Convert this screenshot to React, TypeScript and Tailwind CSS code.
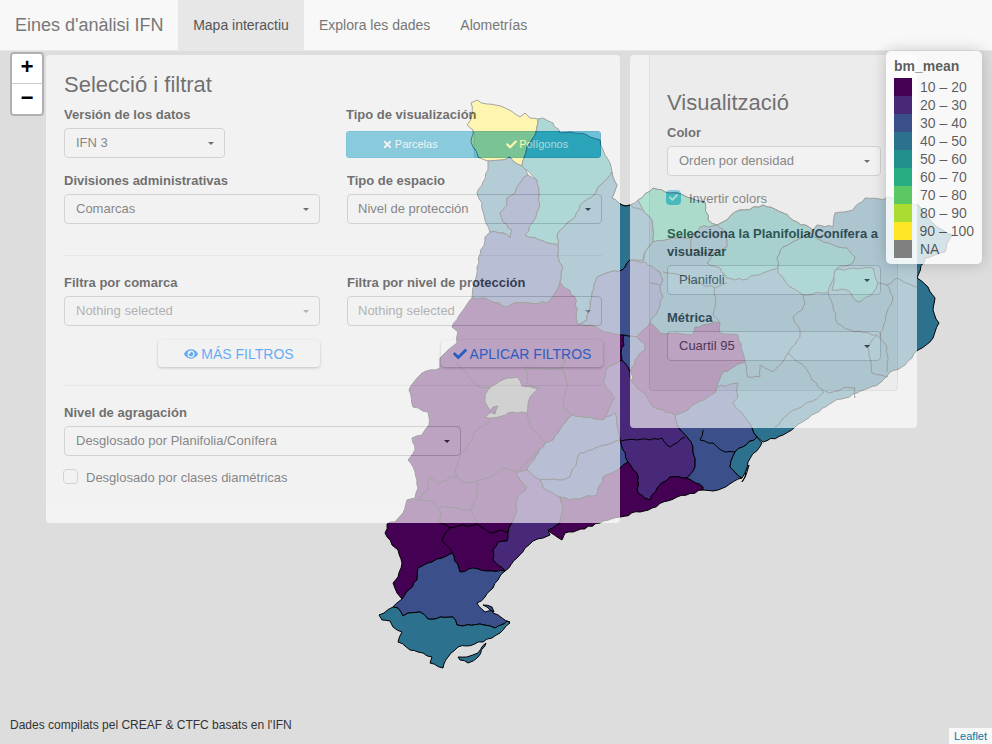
import React from "react";
import { FaCheck, FaEye, FaTimes } from "react-icons/fa";

const C = { a: "#440154", b: "#482878", c: "#3b4f8a", d: "#2c728e", e: "#21908c", f: "#27ad81", g: "#5cc863", h: "#aadc32", i: "#fde725", n: "#808080" };

const shapes: [string, string][] = [
  [C.d, "612,172 617,185 612,198 622,205 630,205 638,200 653,188 665,192 683,195 705,202 708,220 717,225 723,222 735,212 745,210 763,205 783,213 797,222 813,230 817,225 833,227 835,213 853,210 865,198 883,200 887,197 905,200 918,205 925,215 937,227 953,235 947,243 945,252 925,258 917,278 928,287 935,298 933,310 939,323 935,332 933,338 922,348 918,350 905,365 890,372 880,383 857,393 833,402 795,427 783,435 763,442 757,437 752,428 700,400 620,340 578,325 563,283 558,245"],
  [C.i, "471,103 477,100 487,104 503,107 520,117 525,113 530,118 538,119 536,133 527,147 524,158 522,166 513,161 510,157 502,160 488,161 478,157 473,147 471,142 473,130 467,125 472,115"],
  [C.e, "538,119 543,118 553,123 560,133 575,133 587,135 600,140 603,150 610,163 612,172 598,187 592,197 580,205 575,217 567,223 558,233 558,245 547,243 525,235 533,222 539,208 537,180 522,166 524,158 527,147 536,133"],
  [C.d, "488,161 502,160 510,157 513,161 522,166 528,175 524,177 517,187 515,193 507,198 507,205 500,213 503,222 512,230 510,238 503,233 490,232 486,223 484,215 482,203 477,193 483,182 488,170"],
  [C.c, "528,175 537,180 539,208 533,222 525,235 547,243 558,245 558,257 563,267 560,282 557,290 547,303 515,303 507,307 483,298 472,298 477,267 485,237 490,232 503,233 510,238 512,230 503,222 500,213 507,205 507,198 515,193 517,187 524,177"],
  [C.d, "612,172 617,185 612,198 622,205 630,205 643,210 652,220 653,242 645,252 643,260 630,260 622,270 610,272 597,277 592,293 587,320 578,325 575,297 560,282 563,267 558,257 558,245 558,233 567,223 575,217 580,205 592,197 598,187"],
  [C.c, "578,325 587,320 592,293 597,277 610,272 622,270 630,260 645,262 660,272 663,280 660,287 663,297 658,310 650,323 637,337 620,337 600,330 590,325"],
  [C.f, "638,200 653,188 665,192 683,195 705,202 708,220 717,225 700,227 692,237 665,240 653,242 652,220 643,210"],
  [C.e, "717,225 723,222 735,212 745,210 763,205 783,213 797,222 813,230 810,233 797,240 783,247 777,258 778,268 763,273 743,280 727,278 720,268 707,263 715,253 727,247 727,233"],
  [C.e, "777,258 783,247 797,240 810,233 820,240 833,245 847,248 855,257 853,263 837,268 833,280 828,292 803,295 790,287 778,273 778,268"],
  [C.e, "832,290 835,270 853,268 873,268 878,283 873,293 858,302 847,290"],
  [C.a, "472,298 483,298 507,307 515,303 547,303 557,290 560,282 575,297 578,325 590,325 600,330 620,335 624,335 624,345 621,353 622,360 608,367 603,382 615,398 603,420 572,415 563,425 553,440 545,443 527,470 516,473 527,487 517,498 517,510 512,523 508,533 507,541 498,542 493,550 493,560 505,571 487,571 473,568 460,572 452,553 442,558 432,562 418,568 417,580 402,599 397,593 393,583 398,577 402,563 398,550 392,545 385,533 387,524 395,522 403,513 407,500 415,498 418,488 417,480 415,472 408,460 415,450 412,438 422,435 429,425 428,412 413,407 409,390 413,383 422,373 440,368 440,358 448,350 457,343 458,332 452,327"],
  [C.n, "485,395 492,386 507,378 517,377 522,386 538,388 530,397 527,413 513,412 493,418 485,417 491,412 485,402"],
  [C.a, "489,412 493,407 498,406 495,414"],
  [C.c, "624,335 637,337 645,343 645,350 640,353 632,367 630,372 622,360 621,353 624,345"],
  [C.a, "637,337 650,323 660,333 677,333 692,335 695,327 715,322 720,323 720,333 738,335 745,362 723,372 717,387 715,393 697,403 688,410 675,415 663,410 653,407 647,397 632,382 632,367 640,353 645,350 645,343"],
  [C.b, "608,367 622,360 630,372 632,382 647,397 653,407 663,410 675,415 679,428 687,437 693,447 695,467 687,478 670,477 658,487 650,500 638,493 637,473 628,462 620,440 615,413 603,420 615,398 603,382"],
  [C.b, "516,473 527,470 540,480 543,488 560,497 563,510 560,523 548,530 550,535 543,538 533,541 525,548 517,558 505,571 493,560 493,550 498,542 507,541 508,533 512,523 517,510 517,498 527,487"],
  [C.c, "545,443 553,440 563,425 572,415 603,420 615,413 620,440 592,450 580,453 570,477 563,480 540,480 527,470"],
  [C.c, "540,480 563,480 570,477 580,453 592,450 620,440 628,462 620,468 603,477 597,495 570,500 560,497 543,488"],
  [C.a, "560,523 563,510 560,497 570,500 597,495 603,477 620,468 628,462 637,473 638,493 650,500 658,487 670,477 687,478 703,487 703,490 677,497 652,508 620,517 600,523 573,532 565,533 562,540 548,530"],
  [C.c, "675,415 688,410 697,403 715,393 717,387 738,383 738,397 733,403 747,420 752,428 757,437 735,452 730,467 742,478 718,490 703,490 703,487 687,478 695,467 693,447 687,437 679,428"],
  [C.d, "735,452 757,437 762,443 748,462 745,473 742,478 730,467"],
  [C.c, "393,607 402,599 417,580 418,568 432,562 442,558 452,553 460,572 473,568 487,571 505,571 498,580 493,588 485,597 477,603 485,612 492,610 493,613 502,618 510,622 495,628 480,624 463,626 457,625 453,617 428,619 420,612 408,613 403,616 398,608"],
  [C.c, "483,605 492,607 494,612 487,607"],
  [C.d, "393,607 384,613 379,615 382,620 390,621 393,627 402,632 398,642 410,650 423,653 432,657 430,663 443,668 448,657 458,647 483,642 500,633 510,623 507,621 495,628 480,624 463,626 457,625 453,617 428,619 420,612 408,613 403,616 398,608"],
  [C.d, "458,657 460,660 468,663 478,657 486,643 478,653 467,657"],
  ["#ffffff", "742,482 747,472 749,465 746,471"],
];

const lines: string[] = [
  "457,363 477,386 489,387",
  "490,420 477,430 460,457 456,467 457,477 467,483 487,478 502,468 515,472 527,463 545,443 530,427 527,413",
  "538,388 527,383 525,368 562,368 565,360 555,353",
  "553,440 563,425 572,415 563,407 567,383 562,368",
  "429,477 428,490 417,500 433,502 440,510 440,523 450,528 442,540 452,553",
  "429,477 438,484 450,477 457,477",
  "478,483 477,497 470,510 478,523",
  "440,507 470,510",
  "450,528 477,524 490,533 500,530 508,533",
  "653,242 645,252 643,262",
  "692,237 690,250 707,253 715,253",
  "663,272 680,275 690,280 715,288 727,283",
  "715,288 715,307 713,315 720,323",
  "803,295 805,303 802,310 793,317 795,323 800,330 800,337 792,347 788,353 798,362 807,370 812,380 823,390 823,393 813,401 790,412 775,427",
  "825,391 830,393 847,387 855,388 855,398",
  "745,362 748,377 760,377 760,365 773,372 783,362 788,353",
  "828,292 833,305 837,323 850,330 877,335 887,347 887,372",
  "878,283 887,285 897,278 917,287",
  "887,285 893,297 887,312 880,337",
  "877,335 868,348 872,373 888,377",
  "650,283 660,285",
  "621,441 637,440 650,440 662,438 670,447 685,437",
  "703,430 700,440 713,443 725,452 735,452",
];

// Roughen borders the same way on both sides of a shared edge, so they read as real coastlines.
const noise = (x: number, y: number) => {
  const s = Math.sin(x * 12.9898 + y * 78.233) * 43758.5453;
  return s - Math.floor(s) - 0.5;
};

const rough = (points: string, closed: boolean) => {
  const pts = points.split(" ").map((p) => p.split(",").map(Number));
  const out: string[] = [];
  const count = closed ? pts.length : pts.length - 1;
  for (let i = 0; i < count; i++) {
    const a = pts[i];
    const b = pts[(i + 1) % pts.length];
    out.push(`${a[0]},${a[1]}`);
    const flip = a[0] > b[0] || (a[0] === b[0] && a[1] > b[1]);
    const [p, q] = flip ? [b, a] : [a, b];
    const dx = q[0] - p[0];
    const dy = q[1] - p[1];
    const len = Math.hypot(dx, dy);
    const n = Math.floor(len / 4);
    const mids: string[] = [];
    for (let k = 1; k < n; k++) {
      const t = k / n;
      const x = p[0] + dx * t;
      const y = p[1] + dy * t;
      const off = noise(Math.round(x), Math.round(y)) * 2.2;
      mids.push(`${(x - (dy / len) * off).toFixed(1)},${(y + (dx / len) * off).toFixed(1)}`);
    }
    if (flip) mids.reverse();
    out.push(...mids);
  }
  if (!closed) out.push(`${pts[pts.length - 1][0]},${pts[pts.length - 1][1]}`);
  return out.join(" ");
};

const Caret = () => (
  <span className="h-0 w-0 border-x-[3px] border-t-[3px] border-x-transparent border-t-[#333]" />
);

const Select = ({ text, muted, nudge, className }: { text: string; muted?: boolean; nudge?: boolean; className?: string }) => (
  <div className={`flex h-[30px] items-center justify-between rounded border border-[#ccc] bg-white pl-[11px] pr-[10px] text-[13px] ${muted ? "text-[#999]" : "text-[#555]"} ${className ?? ""}`}>
    <span className={nudge ? "-ml-px" : ""}>{text}</span>
    {muted ? (
      <span className="h-0 w-0 border-x-[3px] border-t-[3px] border-x-transparent border-t-[#999]" />
    ) : (
      <Caret />
    )}
  </div>
);

const Label = ({ children, className }: { children: React.ReactNode; className?: string }) => (
  <div className={`text-[13px] font-bold leading-4 text-[#333] ${className ?? ""}`}>{children}</div>
);

const Field = ({ label, text, muted, nudge, className }: { label: string; text: string; muted?: boolean; nudge?: boolean; className?: string }) => (
  <div className={className}>
    <Label className="mb-[5px]">{label}</Label>
    <Select text={text} muted={muted} nudge={nudge} />
  </div>
);

const ActionButton = ({ icon, text }: { icon: React.ReactNode; text: string }) => (
  <div className="flex h-[27px] w-[162px] items-center justify-center gap-[3px] rounded-sm bg-white text-sm text-[#1e90ff] shadow-[0_1px_3px_rgba(0,0,0,0.3)]">
    {icon}
    <span>{text}</span>
  </div>
);

const legendRows: [string, string][] = [
  [C.a, "10 – 20"],
  [C.b, "20 – 30"],
  [C.c, "30 – 40"],
  [C.d, "40 – 50"],
  [C.e, "50 – 60"],
  [C.f, "60 – 70"],
  [C.g, "70 – 80"],
  [C.h, "80 – 90"],
  [C.i, "90 – 100"],
  [C.n, "NA"],
];

export default function App() {
  return (
    <div className="flex h-[744px] w-[992px] flex-col overflow-hidden bg-[#dddddd] font-['Liberation_Sans',Arial,sans-serif]">
      <nav className="flex h-[51px] shrink-0 border-b border-[#e7e7e7] bg-[#f8f8f8] text-sm text-[#777]">
        <div className="flex w-[178px] items-center pl-[15px] text-lg">Eines d'anàlisi IFN</div>
        <div className="flex w-[126px] items-center justify-center bg-[#e7e7e7] text-[#555]">Mapa interactiu</div>
        <div className="flex items-center px-[15px]">Explora les dades</div>
        <div className="flex items-center px-[15px]">Alometrías</div>
      </nav>

      <main className="relative flex-1">
        <svg className="absolute inset-0 h-full w-full" viewBox="0 51 992 693">
          {shapes.map(([fill, points], i) => (
            <polygon key={i} points={rough(points, true)} fill={fill} stroke="#000" strokeWidth="1" strokeLinejoin="round" />
          ))}
          {lines.map((points, i) => (
            <polyline key={i} points={rough(points, false)} fill="none" stroke="#000" strokeWidth="1" strokeLinejoin="round" />
          ))}
        </svg>

        {/* left panel */}
        <section className="absolute left-[46px] top-[4px] h-[468px] w-[574px] rounded-sm bg-white pl-[18px] pr-[18px] pt-[18px] opacity-[0.64]">
          <h3 className="text-[22px] leading-6 text-[#333]">Selecció i filtrat</h3>
          <div className="mt-[10px] grid grid-cols-[256px_255px] gap-x-[27px] gap-y-[15px]">
            <div>
              <Label className="mb-[5px]">Versión de los datos</Label>
              <Select text="IFN 3" className="w-[161px]" />
            </div>
            <div className="-ml-px">
              <Label className="mb-[8px]">Tipo de visualización</Label>
              <div className="flex h-[27px] w-[255px] overflow-hidden rounded-sm text-[11px] text-white">
                <div className="flex flex-1 items-center justify-center gap-[2px] border border-[#46b8da] bg-[#5bc0de]">
                  <FaTimes size={11} />
                  <span>Parcelas</span>
                </div>
                <div className="flex flex-1 items-center justify-center gap-[2px] border border-[#269abc] bg-[#31b0d5]">
                  <FaCheck size={11} />
                  <span>Polígonos</span>
                </div>
              </div>
            </div>
            <Field label="Divisiones administrativas" text="Comarcas" />
            <Field label="Tipo de espacio" text="Nivel de protección" nudge />
          </div>
          <hr className="mt-[31px] border-[#eee]" />
          <div className="mt-[19px] grid grid-cols-[256px_255px] gap-x-[27px]">
            <Field label="Filtra por comarca" text="Nothing selected" muted />
            <Field label="Filtra por nivel de protección" text="Nothing selected" muted nudge />
          </div>
          <div className="mt-[14px] grid grid-cols-[256px_256px] gap-x-[27px]">
            <div className="flex justify-end">
              <ActionButton icon={<FaEye size={14} />} text="MÁS FILTROS" />
            </div>
            <div className="flex justify-end">
              <ActionButton icon={<FaCheck size={14} />} text="APLICAR FILTROS" />
            </div>
          </div>
          <hr className="mt-[18px] border-[#eee]" />
          <Field label="Nivel de agragación" text="Desglosado por Planifolia/Conífera" className="mt-[19px] w-[397px]" />
          <div className="mt-[13px] flex h-[15px] items-center gap-[8px] text-[13px] text-[#555]">
            <span className="-ml-px h-[15px] w-[15px] rounded-sm border border-[#ccc] bg-white" />
            <span className="mt-[2px]">Desglosado por clases diamétricas</span>
          </div>
        </section>

        {/* right panel */}
        <section className="absolute left-[630px] top-[4px] h-[373px] w-[287px] rounded-sm bg-white pl-[19px] opacity-[0.64]">
          <div className="h-[336px] w-[249px] rounded-b border border-t-0 border-[#e3e3e3] bg-[#f5f5f5] pl-[17px] pt-[36px]">
            <h3 className="text-[22px] leading-6 text-[#333]">Visualització</h3>
            <Field label="Color" text="Orden por densidad" className="mt-[10px] w-[214px]" />
            <div className="mt-[14px] flex h-[15px] items-center gap-[8px] text-[13px] text-[#555]">
              <span className="-ml-px flex h-[15px] w-[15px] items-center justify-center rounded-sm bg-[#5bc0de] text-white">
                <FaCheck size={9} />
              </span>
              <span className="mt-[2px]">Invertir colors</span>
            </div>
            <div className="mt-[20px] w-[214px] text-[13px] font-bold leading-[18px] text-[#333]">
              Selecciona la Planifolia/Conífera a visualizar
            </div>
            <Select text="Planifoli" className="mt-[4px] w-[214px]" />
            <Field label="Métrica" text="Cuartil 95" className="mt-[15px] w-[214px]" />
          </div>
        </section>

        {/* zoom control */}
        <div className="absolute left-[10px] top-[1px] w-[34px] overflow-hidden rounded border-2 border-[rgba(0,0,0,0.2)] bg-clip-padding font-['Liberation_Mono',monospace] text-[22px] font-bold text-black">
          <div className="flex h-[30px] items-center justify-center border-b border-[#ccc] bg-white">+</div>
          <div className="flex h-[30px] items-center justify-center bg-white">−</div>
        </div>

        {/* legend */}
        <aside className="absolute left-[886px] top-0 h-[213px] w-[96px] rounded-[5px] bg-[rgba(255,255,255,0.8)] px-[8px] pt-[6px] text-sm leading-[18px] text-[rgba(0,0,0,0.65)] shadow-[0_0_15px_rgba(0,0,0,0.2)]">
          <div className="mb-[3px] font-bold">bm_mean</div>
          {legendRows.map(([color, label]) => (
            <div key={label} className="flex h-[18px] items-center gap-[8px]">
              <span className="h-[18px] w-[18px]" style={{ backgroundColor: color }} />
              <span className="whitespace-nowrap">{label}</span>
            </div>
          ))}
        </aside>

        <div className="absolute bottom-[12px] left-[10px] text-xs leading-[14px] text-[#333]">
          Dades compilats pel CREAF &amp; CTFC basats en l'IFN
        </div>
        <div className="absolute bottom-0 right-0 flex h-4 items-center bg-[rgba(255,255,255,0.8)] px-[5px] text-[11px] text-[#0078a8]">
          Leaflet
        </div>
      </main>
    </div>
  );
}
